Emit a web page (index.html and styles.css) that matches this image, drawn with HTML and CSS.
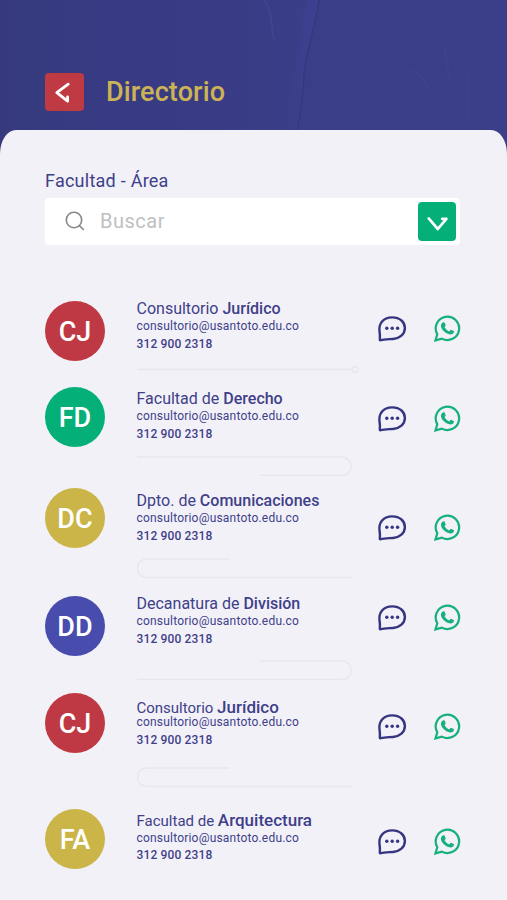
FILE: index.html
```html
<!DOCTYPE html>
<html lang="es">
<head>
<meta charset="utf-8">
<title>Directorio</title>
<link rel="stylesheet" href="styles.css">
</head>
<body>
<svg class="defs" width="0" height="0" aria-hidden="true">
  <symbol id="chat" viewBox="0 0 30 27">
    <path d="M2.8 24.6C2.9 21.8 3.2 20.4 2.6 17.6C1.2 9.2 5.8 2.4 15.2 2.4C23 2.4 27.9 7.2 27.9 13C27.9 19.2 22.6 23.5 16 24C11 24.3 7 24.2 3.8 25.2Q2.8 25.5 2.8 24.6Z" fill="none" stroke="currentColor" stroke-width="2.4" stroke-linejoin="round"/>
    <circle cx="9.8" cy="13.3" r="1.7" fill="currentColor"/><circle cx="15.2" cy="13.3" r="1.7" fill="currentColor"/><circle cx="20.6" cy="13.3" r="1.7" fill="currentColor"/>
  </symbol>
  <symbol id="whatsapp" viewBox="0 0 27 27">
    <path d="M1.5 25.4L3.3 19.2A11.7 11.7 0 1 1 7.8 23.6Z" fill="none" stroke="currentColor" stroke-width="2.2"/>
    <path d="M8.3 7.8Q9.1 6.9 10.1 7.2Q10.6 7.4 10.9 8.3L11.6 10.1Q11.8 10.7 11.3 11.3L10.5 12.3Q12.1 15.1 15.2 16.5L16.5 15Q16.9 14.6 17.5 14.9L19.6 15.9Q20.2 16.2 20 17Q19.6 19.3 16.8 19.6C13.4 19.7 6.9 15.1 6.9 10.8Q6.9 9.1 8.3 7.8Z" fill="currentColor"/>
  </symbol>
  <symbol id="line-dot" viewBox="0 0 224 20">
    <path d="M0 9.5H214.5"/><circle cx="218" cy="9.5" r="3"/>
  </symbol>
  <symbol id="line-right" viewBox="0 0 224 20">
    <path d="M0 1H205A9.2 9.2 0 0 1 205 19.4H123"/>
  </symbol>
  <symbol id="line-left" viewBox="0 0 224 20">
    <path d="M92 1H9.5A9.2 9.2 0 0 0 9.5 19.4H215"/>
  </symbol>
  <symbol id="line-right-up" viewBox="0 0 224 20">
    <path d="M123 1H205A9.2 9.2 0 0 1 205 19.4H0"/>
  </symbol>
</svg>

<header class="header">
  <svg class="texture" viewBox="0 0 507 160" aria-hidden="true">
    <defs>
      <linearGradient id="fold" x1="0" x2="1"><stop offset="0" stop-color="#4145a0" stop-opacity="0"/><stop offset="1" stop-color="#4145a0" stop-opacity=".4"/></linearGradient>
    </defs>
    <path d="M306 0H319C315 28 307 48 304 75C303 98 300 116 297 132H282C292 90 298 50 306 0Z" fill="url(#fold)"/>
    <path d="M319 0C315 28 307 48 304 75C303 98 300 116 297 132" class="crease"/>
    <path d="M264 0C274 14 270 25 274 40" class="crease-light"/>
    <path d="M469 68V118M444 46L450 80M405 68Q424 73 430 92" class="crease-light faint"/>
  </svg>
  <button class="back" aria-label="Volver">
    <svg width="39" height="38" viewBox="0 0 39 38"><path d="M23.2 11.2L11.8 19.6L22.6 28.2V24" fill="none" stroke="#fff" stroke-width="2.8" stroke-linecap="round" stroke-linejoin="round"/></svg>
  </button>
  <h1 class="title">Directorio</h1>
</header>

<main class="panel">
  <h2 class="label">Facultad - Área</h2>
  <div class="search">
    <svg class="glass" width="20" height="20" viewBox="0 0 20 20"><circle cx="9" cy="9" r="7.7"/><path d="M14.5 14.7L18.3 18.5"/></svg>
    <span class="hint">Buscar</span>
    <button class="filter" aria-label="Desplegar">
      <svg width="38" height="39" viewBox="0 0 38 39"><path d="M10.7 16.4L19.8 27L28.4 16.8H24.2" fill="none" stroke="#fff" stroke-width="2.7" stroke-linecap="round" stroke-linejoin="round"/></svg>
    </button>
  </div>

  <ul class="list">
    <li class="row r1">
      <span class="avatar red">CJ</span>
      <div class="info">
        <p class="name">Consultorio <b>Jurídico</b></p><p class="mail">consultorio@usantoto.edu.co</p><p class="phone">312 900 2318</p>
        <svg class="divider"><use href="#line-dot"/></svg>
      </div>
      <div class="actions"><svg class="chat"><use href="#chat"/></svg><svg class="wa"><use href="#whatsapp"/></svg></div>
    </li>
    <li class="row r2">
      <span class="avatar green">FD</span>
      <div class="info">
        <p class="name">Facultad de <b>Derecho</b></p><p class="mail">consultorio@usantoto.edu.co</p><p class="phone">312 900 2318</p>
        <svg class="divider"><use href="#line-right"/></svg>
      </div>
      <div class="actions"><svg class="chat"><use href="#chat"/></svg><svg class="wa"><use href="#whatsapp"/></svg></div>
    </li>
    <li class="row r3">
      <span class="avatar gold">DC</span>
      <div class="info">
        <p class="name">Dpto. de <b>Comunicaciones</b></p><p class="mail">consultorio@usantoto.edu.co</p><p class="phone">312 900 2318</p>
        <svg class="divider"><use href="#line-left"/></svg>
      </div>
      <div class="actions"><svg class="chat"><use href="#chat"/></svg><svg class="wa"><use href="#whatsapp"/></svg></div>
    </li>
    <li class="row r4">
      <span class="avatar blue">DD</span>
      <div class="info">
        <p class="name">Decanatura de <b>División</b></p><p class="mail">consultorio@usantoto.edu.co</p><p class="phone">312 900 2318</p>
        <svg class="divider"><use href="#line-right-up"/></svg>
      </div>
      <div class="actions"><svg class="chat"><use href="#chat"/></svg><svg class="wa"><use href="#whatsapp"/></svg></div>
    </li>
    <li class="row r5">
      <span class="avatar red">CJ</span>
      <div class="info">
        <p class="name">Consultorio <b>Jurídico</b></p><p class="mail">consultorio@usantoto.edu.co</p><p class="phone">312 900 2318</p>
        <svg class="divider"><use href="#line-left"/></svg>
      </div>
      <div class="actions"><svg class="chat"><use href="#chat"/></svg><svg class="wa"><use href="#whatsapp"/></svg></div>
    </li>
    <li class="row r6">
      <span class="avatar gold">FA</span>
      <div class="info">
        <p class="name">Facultad de <b>Arquitectura</b></p><p class="mail">consultorio@usantoto.edu.co</p><p class="phone">312 900 2318</p>
      </div>
      <div class="actions"><svg class="chat"><use href="#chat"/></svg><svg class="wa"><use href="#whatsapp"/></svg></div>
    </li>
  </ul>
</main>
</body>
</html>
```
FILE: styles.css
```css
* { box-sizing: border-box; margin: 0; padding: 0; }
html, body { height: 900px; overflow: hidden; }
body {
  background: linear-gradient(90deg, #363a7d 0, #383b83 22%, #3a3d87 60%, #3b3e88 100%);
  font-family: Roboto, "Liberation Sans", sans-serif;
  color: #403f89;
}
button { border: 0; display: block; }
svg { display: block; }
.defs { position: absolute; }

.header { position: relative; height: 130px; padding: 73px 0 0 45px; display: flex; align-items: flex-start; }
.texture { position: absolute; left: 0; top: 0; width: 507px; height: 160px; }
.crease { fill: none; stroke: #30336f; stroke-width: 1.2; opacity: .6; }
.crease-light { fill: none; stroke: #474b9d; stroke-width: 1.5; opacity: .6; }
.faint { opacity: .35; }
.back { position: relative; width: 39px; height: 38px; border-radius: 4px; background: #c03a44; }
.title { position: relative; margin-left: 22px; font-size: 27px; line-height: 38px; font-weight: 500; letter-spacing: .1px; color: #ccb455; }

.panel { position: relative; height: 770px; padding: 38.5px 47px 0 45px; background: #f2f1f8; border-radius: 16px 16px 0 0 / 24px 24px 0 0; }
.label { font-size: 18px; line-height: 24px; font-weight: 400; letter-spacing: .25px; }
.search { display: flex; align-items: center; height: 47px; margin-top: 5px; padding: 0 4px 0 20px; background: #fff; border-radius: 4px; }
.glass { fill: none; stroke: #868686; stroke-width: 1.6; stroke-linecap: round; }
.hint { flex: 1; margin-left: 15px; font-size: 20px; letter-spacing: .5px; color: #c0c0c0; }
.filter { width: 38px; height: 39px; border-radius: 4px; background: #05b078; }

.list { list-style: none; margin-top: 54px; }
.row { display: grid; grid-template-columns: 91.5px 240px 84px; align-items: start; }
.avatar { width: 60px; height: 60px; border-radius: 50%; color: #fff; font-size: 27px; font-weight: 500; line-height: 62px; text-align: center; }
.red { background: #bf3944; }
.green { background: #05b078; }
.gold { background: #cbb548; }
.blue { background: #474cad; }
.name { font-size: 16px; line-height: 20px; white-space: nowrap; }
.name b { font-weight: 500; }
.mail { font-size: 12px; line-height: 17px; letter-spacing: .2px; margin-top: -.6px; }
.phone { font-size: 12px; line-height: 17px; font-weight: 500; letter-spacing: .15px; margin-top: .6px; }
.divider { width: 224px; height: 20px; fill: none; stroke: #e6e6ec; stroke-width: 1.4; }
.actions { display: flex; justify-content: space-between; }
.chat { width: 30px; height: 27px; color: #36357f; }
.wa { width: 27px; height: 27px; color: #16b07b; }

.r1 { height: 90px; }
.r1 .avatar { margin-top: 2.5px; }
.r1 .actions { margin-top: 16px; }
.r1 .divider { margin-top: 7.5px; }
.r2 { height: 102.5px; }
.r2 .avatar { margin-top: -1.5px; }
.r2 .actions { margin-top: 16px; }
.r2 .divider { margin-top: 13.5px; }
.r3 { height: 102.5px; }
.r3 .avatar { margin-top: -3px; }
.r3 .actions { margin-top: 22.5px; }
.r3 .divider { margin-top: 13px; }
.r4 { height: 104px; }
.r4 .avatar { margin-top: 2.5px; }
.r4 .actions { margin-top: 10.5px; }
.r4 .divider { margin-top: 12.5px; }
.r5 { height: 113px; }
.r5 .avatar { margin-top: -4.5px; }
.r5 .actions { margin-top: 15.5px; }
.r5 .name, .r6 .name { font-size: 15px; line-height: 18px; }
.r5 .name b, .r6 .name b { font-size: 17px; line-height: 18px; }
.r5 .mail { margin-top: -2.5px; }
.r5 .divider { margin-top: 18.5px; }
.r6 .mail { margin-top: 0; }
.r6 .phone { margin-top: 0; }
.r6 .avatar { margin-top: -1.5px; }
.r6 .actions { margin-top: 17.5px; }
```
